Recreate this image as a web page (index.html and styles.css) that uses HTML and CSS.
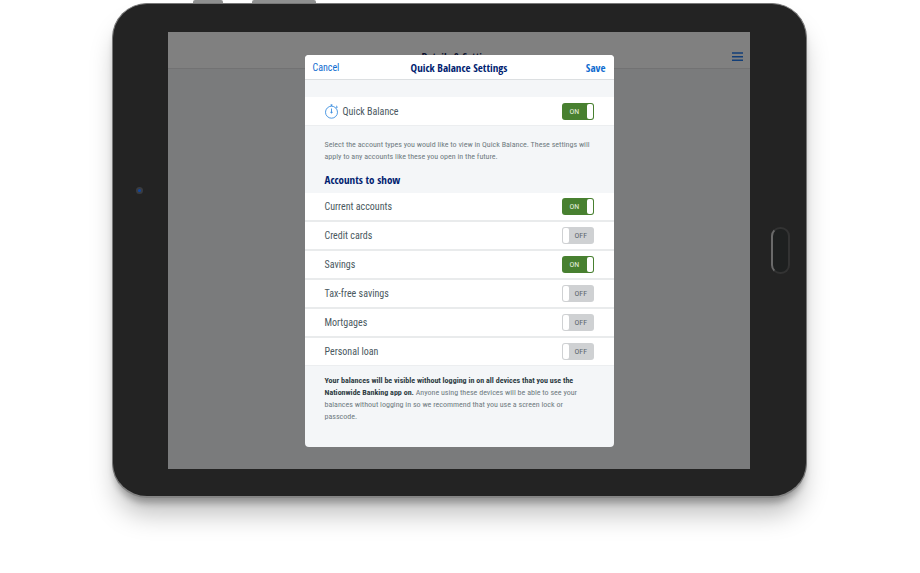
FILE: index.html
```
<!DOCTYPE html>
<html lang="en">

<head>
    <meta charset="UTF-8">
    <meta name="viewport" content="width=device-width, initial-scale=1.0">
    <title>Quick Balance Settings</title>
    <link rel="stylesheet" href="styles.css">
</head>

<body>
    <div class="tablet">
        <span class="side-btn side-btn-small"></span>
        <span class="side-btn side-btn-wide"></span>
        <div class="bezel">
            <span class="camera"></span>
        </div>
        <div class="screen">
            <header class="app-bar">
                <h1>Details &amp; Settings</h1>
                <button class="menu-btn" aria-label="Menu">
                    <svg width="11" height="9" viewBox="0 0 11 9">
                        <path d="M0 1h11M0 4.7h11M0 8.3h11" stroke="#123e78" stroke-width="1.4" />
                    </svg>
                </button>
            </header>
            <form class="modal">
                <div class="modal-header">
                    <button type="button" class="cancel">Cancel</button>
                    <h2>Quick Balance Settings</h2>
                    <button type="button" class="save">Save</button>
                </div>
                <label class="row row-main">
                    <svg class="timer" width="14" height="15" viewBox="0 0 14 15" fill="none" stroke="#3d8fe0" stroke-width=".9">
                        <circle cx="6.5" cy="8.2" r="6" />
                        <path d="M6.5 2.2V.6M5.4 1h2.2M10.8 4l1-1M11 1.8l1.8 1.6M6.5 4.5v3.2" />
                        <circle cx="6.5" cy="8.3" r=".7" fill="#3d8fe0" />
                    </svg>
                    <span class="name">Quick Balance</span>
                    <span class="toggle"><input type="checkbox" checked><span class="on">ON</span><span class="off">OFF</span></span>
                </label>
                <p class="intro">Select the account types you would like to view in Quick Balance. These settings will apply to any accounts like these you open in the future.</p>
                <h3>Accounts to show</h3>
                <div class="accounts">
                    <label class="row">
                        <span class="name">Current accounts</span>
                        <span class="toggle"><input type="checkbox" checked><span class="on">ON</span><span class="off">OFF</span></span>
                    </label>
                    <label class="row">
                        <span class="name">Credit cards</span>
                        <span class="toggle"><input type="checkbox"><span class="on">ON</span><span class="off">OFF</span></span>
                    </label>
                    <label class="row">
                        <span class="name">Savings</span>
                        <span class="toggle"><input type="checkbox" checked><span class="on">ON</span><span class="off">OFF</span></span>
                    </label>
                    <label class="row">
                        <span class="name">Tax-free savings</span>
                        <span class="toggle"><input type="checkbox"><span class="on">ON</span><span class="off">OFF</span></span>
                    </label>
                    <label class="row">
                        <span class="name">Mortgages</span>
                        <span class="toggle"><input type="checkbox"><span class="on">ON</span><span class="off">OFF</span></span>
                    </label>
                    <label class="row">
                        <span class="name">Personal loan</span>
                        <span class="toggle"><input type="checkbox"><span class="on">ON</span><span class="off">OFF</span></span>
                    </label>
                </div>
                <p class="notice"><strong>Your balances will be visible without logging in on all devices that you use the Nationwide Banking app on.</strong> Anyone using these devices will be able to see your balances without logging in so we recommend that you use a screen lock or passcode.</p>
            </form>
        </div>
        <div class="bezel">
            <button class="home-btn" aria-label="Home"></button>
        </div>
    </div>
</body>

</html>
```
FILE: styles.css
```
* {
    box-sizing: border-box;
}

body {
    margin: 0;
    min-height: 100vh;
    padding-top: 3px;
    background: #fff;
    font-family: "Roboto Condensed", "Roboto", sans-serif;
    font-size: 10px;
    color: #4a5860;
}

h1,
h2,
h3,
p {
    margin: 0;
}

h1,
h2,
h3,
.save {
    font-family: "Open Sans Condensed", "Open Sans", sans-serif;
    font-weight: bold;
}

button {
    border: 0;
    padding: 0;
    background: none;
    font: inherit;
    cursor: pointer;
}

/* device */
.tablet {
    position: relative;
    display: grid;
    grid-template-columns: 55px 1fr 56px;
    margin: 0 113px 0 112px;
    padding: 28px 0 27px;
    background: #232323;
    border: 1px solid #777;
    border-bottom: 2px solid #858585;
    border-radius: 35px;
    box-shadow: 0 7px 6px -2px rgba(0, 0, 0, 0.25), 0 20px 26px -4px rgba(0, 0, 0, 0.25);
}

.side-btn {
    position: absolute;
    top: -4px;
    height: 3px;
    background: #8f9090;
    border-radius: 2px 2px 0 0;
}

.side-btn-small {
    left: 80px;
    width: 30px;
}

.side-btn-wide {
    left: 139px;
    width: 64px;
}

.bezel {
    display: flex;
    align-items: center;
    justify-content: center;
}

.camera {
    width: 7px;
    height: 7px;
    margin: 0 2px 120px 0;
    border: 2px solid #3a3c40;
    border-radius: 50%;
    background: #0f45a0;
}

.home-btn {
    width: 19px;
    height: 47px;
    margin-left: 4px;
    border: 2px solid #333;
    border-left-color: #6a6a6a;
    border-radius: 9px;
    background: #1e2020;
}

/* screen, already dimmed behind the modal */
.screen {
    display: grid;
    background: #7a7b7c;
}

.app-bar,
.modal {
    grid-area: 1 / 1;
}

.app-bar {
    display: grid;
    grid-template-columns: 1fr auto 1fr;
    align-items: end;
    align-self: start;
    height: 37px;
    padding: 0 7px 6px;
    background: #808080;
    border-bottom: 1px solid #727273;
}

.app-bar h1 {
    grid-column: 2;
    font-size: 11px;
    line-height: 11px;
    color: #0a0f2c;
}

.menu-btn {
    justify-self: end;
    height: 12px;
}

.menu-btn svg {
    display: block;
}

.modal {
    justify-self: center;
    width: 100%;
    max-width: 309px;
    margin: 23px 0 22px;
    padding-bottom: 24px;
    background: #f4f6f8;
    border-radius: 4px;
    overflow: hidden;
}

.modal-header {
    display: grid;
    grid-template-columns: 1fr auto 1fr;
    align-items: center;
    height: 25px;
    margin-bottom: 17px;
    padding: 0 8px;
    background: #fff;
    border-bottom: 1px solid #dcdfe1;
}

.modal-header h2 {
    font-size: 11px;
    color: #011d70;
}

.cancel,
.save {
    color: #0f6cd0;
}

.cancel {
    justify-self: start;
}

.save {
    justify-self: end;
    font-size: 11px;
}

.row {
    display: flex;
    align-items: center;
    height: 29px;
    padding: 0 20px;
    background: #fff;
    border-bottom: 2px solid #e9ebec;
}

.row-main,
.row:last-child {
    border-bottom: 1px solid #eceef0;
}

.row:last-child {
    height: 28px;
}

.timer {
    margin-right: 4px;
}

.name {
    flex: 1;
}

.intro,
.notice {
    padding: 0 22px 0 20px;
    font-size: 8px;
    line-height: 12px;
    color: #6f7b81;
}

.intro {
    padding-top: 13px;
}

.notice {
    padding-top: 9px;
}

.notice strong {
    color: #2f3d44;
}

h3 {
    padding: 10px 20px 7px;
    font-size: 11px;
    line-height: 13px;
    color: #011d70;
}

/* switches */
.toggle {
    display: grid;
    align-items: center;
    width: 32px;
    height: 17px;
    font-size: 8px;
}

.toggle > * {
    grid-area: 1 / 1;
}

.toggle input {
    appearance: none;
    display: flex;
    width: 100%;
    height: 100%;
    margin: 0;
    padding: 1px;
    background: #cfd1d3;
    border-radius: 3px;
    cursor: pointer;
}

.toggle input::before {
    content: "";
    width: 6px;
    background: #fff;
    border-radius: 2px;
}

.toggle input:checked {
    justify-content: flex-end;
    background: #488030;
}

.toggle .on,
.toggle .off {
    z-index: 1;
    pointer-events: none;
}

.toggle .on {
    display: none;
    padding-left: 8px;
    color: #e4efdf;
}

.toggle .off {
    padding-left: 13px;
    color: #5d686e;
}

.toggle input:checked ~ .on {
    display: block;
}

.toggle input:checked ~ .off {
    display: none;
}
```
